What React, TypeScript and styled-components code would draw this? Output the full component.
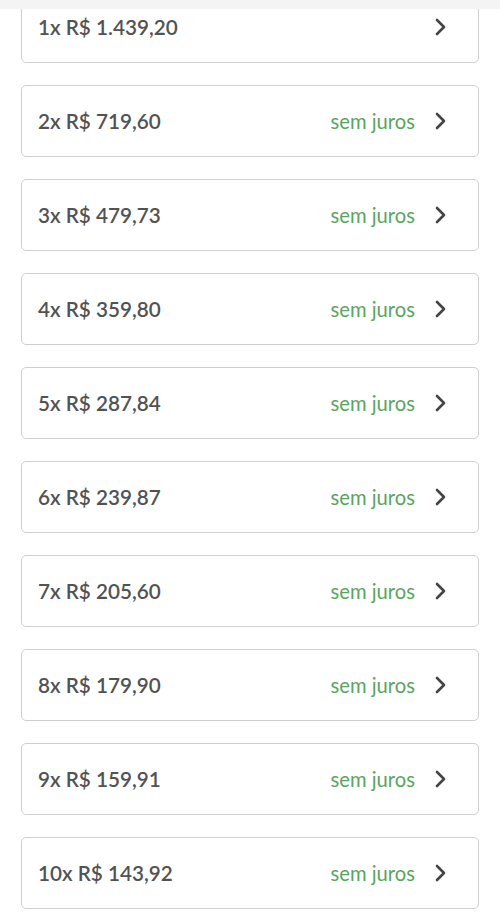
import styled, { createGlobalStyle } from 'styled-components'

const GlobalStyle = createGlobalStyle`
  html, body {
    margin: 0;
    padding: 0;
    background: #fff;
    font-family: 'Lato', 'Open Sans', sans-serif;
  }
`

const TopBar = styled.div`
  position: fixed;
  top: 0;
  left: 0;
  right: 0;
  height: 9px;
  background-color: #f4f4f4;
  z-index: 2;
`

const List = styled.div`
  display: flex;
  flex-direction: column;
  gap: 22px;
  margin-top: -9px;
  padding: 0 21px;
`

const Option = styled.button`
  display: flex;
  align-items: center;
  height: 72px;
  padding: 0 31px 0 16px;
  background: #fff;
  border: 1px solid #cfcfcf;
  border-radius: 5px;
  font-family: inherit;
  text-align: left;
  cursor: pointer;
`

const Price = styled.span`
  flex: 1;
  font-size: 20.7px;
  font-weight: 600;
  color: #525252;
`

const NoInterest = styled.span`
  font-size: 20.2px;
  font-weight: 400;
  color: #5aa55e;
  margin-right: 19px;
`

const Chevron = () => (
  <svg width="13" height="18" viewBox="0 0 13 18" fill="none">
    <path
      d="M3 2l7 7-7 7"
      stroke="#444"
      strokeWidth="2.6"
      strokeLinecap="round"
      strokeLinejoin="round"
    />
  </svg>
)

const installments = [
  '1.439,20',
  '719,60',
  '479,73',
  '359,80',
  '287,84',
  '239,87',
  '205,60',
  '179,90',
  '159,91',
  '143,92',
]

const App = () => {
  return (
    <>
      <GlobalStyle />
      <TopBar />
      <List>
        {installments.map((value, index) => (
          <Option key={value}>
            <Price>
              {index + 1}x R$ {value}
            </Price>
            {index > 0 && <NoInterest>sem juros</NoInterest>}
            <Chevron />
          </Option>
        ))}
      </List>
    </>
  )
}

export default App
